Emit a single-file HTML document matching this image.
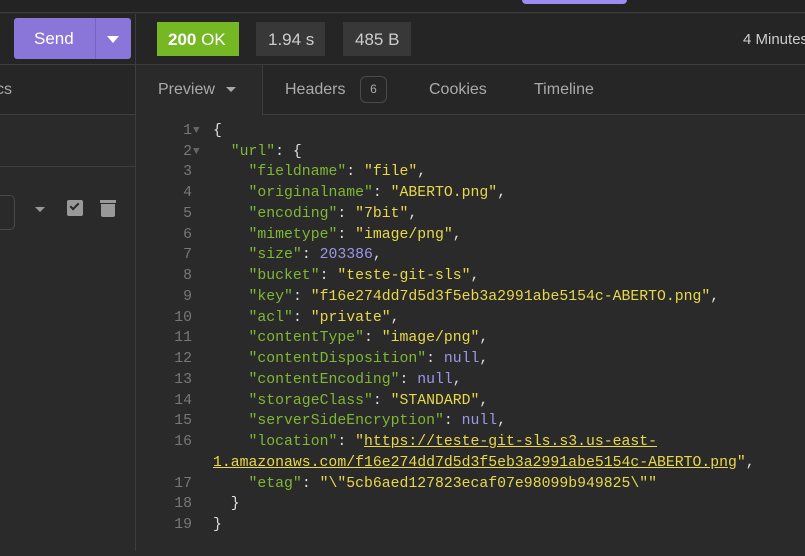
<!DOCTYPE html>
<html><head><meta charset="utf-8"><style>
*{margin:0;padding:0;box-sizing:border-box}
body{width:805px;height:551px;overflow:hidden;background:#2a2a2a;font-family:"Liberation Sans",sans-serif;position:relative;color:#ccc}
.a{position:absolute}
.code{position:absolute;left:0;top:121px;font-family:"Liberation Mono",monospace;font-size:14.8px;line-height:20.74px;white-space:pre}
.ln{position:absolute;left:140px;width:52px;text-align:right;color:#777}
.tx{position:absolute;left:213px;color:#ddd}
.k{color:#7fb834}.s{color:#e8d84a}.n{color:#9d97e8}.u{color:#e8d84a;text-decoration:underline}
.fold{position:absolute;left:193px;color:#666;font-size:11px}
</style></head><body>
<div class="a" style="left:0;top:0;width:805px;height:13px;background:#232323;border-bottom:1px solid #3d3d3d"></div>
<div class="a" style="left:522px;top:0;width:105px;height:4px;background:#9c8bf0;border-radius:0 0 5px 5px"></div>
<div class="a" style="left:0;top:14px;width:805px;height:51px;background:#252525;border-bottom:1px solid #3d3d3d"></div>
<div class="a" style="left:14px;top:18px;width:117px;height:41px;background:#8a76d8;border-radius:3px"></div>
<div class="a" style="left:95px;top:18px;width:1px;height:41px;background:#7565c0"></div>
<div class="a" style="left:34px;top:29px;font-size:17px;color:#fff">Send</div>
<div class="a" style="left:107px;top:36px;border-left:6px solid transparent;border-right:6px solid transparent;border-top:7px solid #fff"></div>
<div class="a" style="left:135px;top:14px;width:1px;height:537px;background:#3d3d3d"></div>
<div class="a" style="left:157px;top:22px;width:82px;height:34px;background:#75b824"></div>
<div class="a" style="left:168px;top:30px;font-size:17px;color:#fff"><b>200</b> OK</div>
<div class="a" style="left:256px;top:22px;width:69px;height:34px;background:#383838"></div>
<div class="a" style="left:268px;top:30px;font-size:17px;color:#ccc">1.94 s</div>
<div class="a" style="left:343px;top:22px;width:68px;height:34px;background:#383838"></div>
<div class="a" style="left:355px;top:30px;font-size:17px;color:#ccc">485 B</div>
<div class="a" style="left:743px;top:31px;font-size:15px;color:#ccc;white-space:nowrap">4 Minutes</div>
<div class="a" style="left:0;top:65px;width:135px;height:50px;background:#262626;border-bottom:1px solid #3d3d3d"></div>
<div class="a" style="left:-4px;top:81px;font-size:16px;color:#aaa">cs</div>
<div class="a" style="left:0;top:166px;width:135px;height:1px;background:#3d3d3d"></div>
<div class="a" style="left:-10px;top:195px;width:25px;height:35px;border:1px solid #4a4a4a;border-radius:5px"></div>
<div class="a" style="left:35px;top:207px;border-left:5px solid transparent;border-right:5px solid transparent;border-top:5px solid #999"></div>
<div class="a" style="left:67px;top:200px;width:16px;height:16px;background:#999;border-radius:2px"></div>
<div class="a" style="left:70px;top:203px;width:9px;height:5px;border-left:2px solid #2a2a2a;border-bottom:2px solid #2a2a2a;transform:rotate(-45deg)"></div>
<div class="a" style="left:100px;top:200px;width:16px;height:3px;background:#999"></div>
<div class="a" style="left:101px;top:204px;width:14px;height:13px;background:#999;border-radius:0 0 2px 2px"></div>
<div class="a" style="left:136px;top:65px;width:669px;height:50px;background:#262626"></div>
<div class="a" style="left:263px;top:114px;width:542px;height:1px;background:#3d3d3d"></div>
<div class="a" style="left:136px;top:65px;width:127px;height:50px;background:#2a2a2a;border-right:1px solid #3d3d3d"></div>
<div class="a" style="left:158px;top:81px;font-size:16px;color:#aaa">Preview</div>
<div class="a" style="left:226px;top:87px;border-left:5px solid transparent;border-right:5px solid transparent;border-top:5px solid #aaa"></div>
<div class="a" style="left:285px;top:81px;font-size:16px;color:#aaa">Headers</div>
<div class="a" style="left:360px;top:76px;width:27px;height:27px;border:1px solid #4a4a4a;border-radius:6px;font-size:12px;color:#aaa;text-align:center;line-height:25px">6</div>
<div class="a" style="left:429px;top:81px;font-size:16px;color:#aaa">Cookies</div>
<div class="a" style="left:534px;top:81px;font-size:16px;color:#aaa">Timeline</div>
<div class="code">
<div class="ln" style="top:0">1</div><div class="fold" style="top:0">▼</div><div class="tx" style="top:0">{</div>
<div class="ln" style="top:20.74px">2</div><div class="fold" style="top:20.74px">▼</div><div class="tx" style="top:20.74px">  <span class="k">"url"</span>: {</div>
<div class="ln" style="top:41.48px">3</div><div class="tx" style="top:41.48px">    <span class="k">"fieldname"</span>: <span class="s">"file"</span>,</div>
<div class="ln" style="top:62.22px">4</div><div class="tx" style="top:62.22px">    <span class="k">"originalname"</span>: <span class="s">"ABERTO.png"</span>,</div>
<div class="ln" style="top:82.96px">5</div><div class="tx" style="top:82.96px">    <span class="k">"encoding"</span>: <span class="s">"7bit"</span>,</div>
<div class="ln" style="top:103.7px">6</div><div class="tx" style="top:103.7px">    <span class="k">"mimetype"</span>: <span class="s">"image/png"</span>,</div>
<div class="ln" style="top:124.44px">7</div><div class="tx" style="top:124.44px">    <span class="k">"size"</span>: <span class="n">203386</span>,</div>
<div class="ln" style="top:145.18px">8</div><div class="tx" style="top:145.18px">    <span class="k">"bucket"</span>: <span class="s">"teste-git-sls"</span>,</div>
<div class="ln" style="top:165.92px">9</div><div class="tx" style="top:165.92px">    <span class="k">"key"</span>: <span class="s">"f16e274dd7d5d3f5eb3a2991abe5154c-ABERTO.png"</span>,</div>
<div class="ln" style="top:186.66px">10</div><div class="tx" style="top:186.66px">    <span class="k">"acl"</span>: <span class="s">"private"</span>,</div>
<div class="ln" style="top:207.4px">11</div><div class="tx" style="top:207.4px">    <span class="k">"contentType"</span>: <span class="s">"image/png"</span>,</div>
<div class="ln" style="top:228.14px">12</div><div class="tx" style="top:228.14px">    <span class="k">"contentDisposition"</span>: <span class="n">null</span>,</div>
<div class="ln" style="top:248.88px">13</div><div class="tx" style="top:248.88px">    <span class="k">"contentEncoding"</span>: <span class="n">null</span>,</div>
<div class="ln" style="top:269.62px">14</div><div class="tx" style="top:269.62px">    <span class="k">"storageClass"</span>: <span class="s">"STANDARD"</span>,</div>
<div class="ln" style="top:290.36px">15</div><div class="tx" style="top:290.36px">    <span class="k">"serverSideEncryption"</span>: <span class="n">null</span>,</div>
<div class="ln" style="top:311.1px">16</div><div class="tx" style="top:311.1px">    <span class="k">"location"</span>: <span class="s">"<span class="u">https://teste-git-sls.s3.us-east-</span></span></div>
<div class="tx" style="top:331.84px"><span class="s"><span class="u">1.amazonaws.com/f16e274dd7d5d3f5eb3a2991abe5154c-ABERTO.png</span>"</span>,</div>
<div class="ln" style="top:352.58px">17</div><div class="tx" style="top:352.58px">    <span class="k">"etag"</span>: <span class="s">"\"5cb6aed127823ecaf07e98099b949825\""</span></div>
<div class="ln" style="top:373.32px">18</div><div class="tx" style="top:373.32px">  }</div>
<div class="ln" style="top:394.06px">19</div><div class="tx" style="top:394.06px">}</div>
</div>
</body></html>
